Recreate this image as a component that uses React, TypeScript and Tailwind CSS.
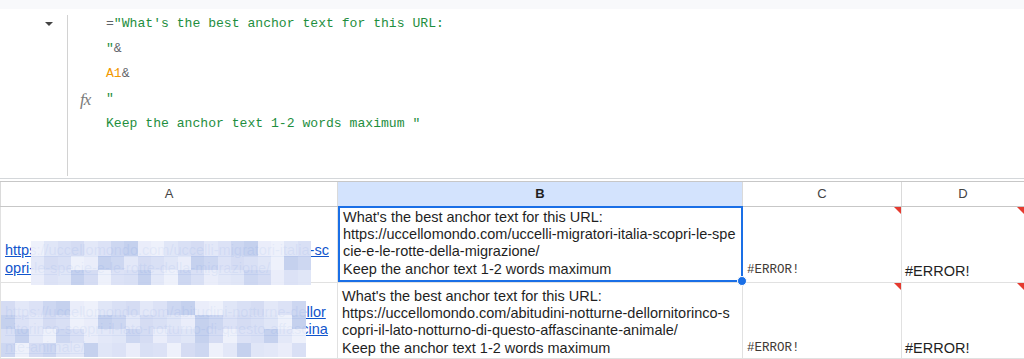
import React from "react";

const cols = "grid-cols-[338px_405px_159px_1fr]";

// pixelated blur tiles over the private URLs
function Mosaic({ rows, cols: n, seed, className }: { rows: number; cols: number; seed: number; className: string }) {
    const tones = ["#d3dbf3", "#dfe5f7", "#e9edfa", "#cbd5f1", "#e2e7f8", "#d8dff5", "#eef1fb", "#c2cfee", "#dbe1f6"];
    const cells = [];
    for (let r = 0; r < rows; r++) {
        for (let c = 0; c < n; c++) {
            const i = (r * 7 + c * 13 + seed * 5 + ((c * r + seed) % 4)) % tones.length;
            cells.push(<div key={`${r}-${c}`} style={{ backgroundColor: tones[i] }} />);
        }
    }
    return (
        <div
            className={`absolute grid opacity-95 ${className}`}
            style={{ gridTemplateColumns: `repeat(${n}, 1fr)`, gridTemplateRows: `repeat(${rows}, 1fr)` }}
        >
            {cells}
        </div>
    );
}

function ErrorCorner() {
    return <div className="absolute top-0 right-0 w-0 h-0 border-t-[7px] border-l-[7px] border-t-[#e53a2f] border-l-transparent" />;
}

export default function App() {
    const green = "text-[#1e8e3e]";
    return (
        <div className="w-[1024px] h-[359px] overflow-hidden bg-white font-['Liberation_Sans',Arial,sans-serif]">
            <div className="h-[9px] bg-[#f8f9fb]" />

            {/* formula bar */}
            <div className="flex h-[170px] border-b border-[#d4d7da]">
                <div className="w-[67px] pl-[45px] pt-[13px]">
                    <div className="w-0 h-0 border-x-[4px] border-x-transparent border-t-[4px] border-t-[#444]" />
                </div>
                <div className="mt-[6px] mb-[2px] w-px bg-[#d2d2d2]" />
                <div className="w-[38px] pl-[12px] pt-[78px]">
                    <span className="font-['Liberation_Serif',serif] italic text-[17px] text-[#7a7a7a] tracking-[-1px]">fx</span>
                </div>
                <div className="pt-[2px] font-['Liberation_Mono',monospace] text-[13.1px] leading-[25px] whitespace-pre text-[#5f6368]">
                    <div>=<span className={green}>"What's the best anchor text for this URL:</span></div>
                    <div><span className={green}>"</span>&amp;</div>
                    <div><span className="text-[#f29900]">A1</span>&amp;</div>
                    <div><span className={green}>"</span></div>
                    <div><span className={green}>Keep the anchor text 1-2 words maximum "</span></div>
                </div>
            </div>

            {/* sheet */}
            <div className="mt-[2px] border-t border-[#c7c7c7]">
                <div className={`grid ${cols} h-[25px] text-[13px] text-[#444] border-b border-[#c7c7c7]`}>
                    <div className="flex items-center justify-center border-l border-r border-[#dadada]">A</div>
                    <div className="flex items-center justify-center border-r border-[#dadada] bg-[#d3e3fd] font-bold text-[#1f1f1f]">B</div>
                    <div className="flex items-center justify-center border-r border-[#dadada]">C</div>
                    <div className="flex items-center justify-center">D</div>
                </div>

                {/* row 1 */}
                <div className={`grid ${cols} h-[76px] text-[14.5px] leading-[17.3px] border-b border-[#e1e1e1]`}>
                    <div className="relative flex flex-col justify-end px-[4px] pb-[5px] border-l border-r border-[#e1e1e1] break-all">
                        <span className="text-[#1155cc] underline">https://uccellomondo.com/uccelli-migratori-italia-scopri-le-specie-e-le-rotte-della-migrazione/</span>
                        <Mosaic rows={3} cols={21} seed={1} className="left-[30px] top-[34px] w-[280px] h-[44px] rounded-[8px]" />
                    </div>
                    <div className="relative flex flex-col justify-end px-[3px] pb-[2px] border-2 border-[#1a6fe6] -mt-px text-[#1f1f1f]">
                        <div>What's the best anchor text for this URL:</div>
                        <div className="break-all">https://uccellomondo.com/uccelli-migratori-italia-scopri-le-specie-e-le-rotte-della-migrazione/</div>
                        <div>Keep the anchor text 1-2 words maximum</div>
                        <div className="absolute -right-[6px] -bottom-[6px] w-[10px] h-[10px] rounded-full bg-[#1a6fe6] border border-white" />
                    </div>
                    <div className="relative flex items-end px-[4px] pb-[3px] border-r border-[#e1e1e1]">
                        <span className="font-['Liberation_Mono',monospace] text-[12.5px] text-[#3f3a36]">#ERROR!</span>
                        <ErrorCorner />
                    </div>
                    <div className="relative flex items-end px-[3px] pb-[2px] text-[#1f1f1f]">
                        <span>#ERROR!</span>
                        <ErrorCorner />
                    </div>
                </div>

                {/* row 2 */}
                <div className={`grid ${cols} h-[76px] text-[14.5px] leading-[17.3px] border-b border-[#e1e1e1]`}>
                    <div className="relative flex flex-col justify-end px-[4px] pb-[2px] border-l border-r border-[#e1e1e1] break-all">
                        <span className="text-[#1155cc] underline">https://uccellomondo.com/abitudini-notturne-dellornitorinco-scopri-il-lato-notturno-di-questo-affascinante-animale/</span>
                        <Mosaic rows={4} cols={22} seed={3} className="left-0 top-[18px] w-[305px] h-[56px] rounded-tr-[10px]" />
                    </div>
                    <div className="flex flex-col justify-end pl-[4px] pr-[7px] pb-[1px] border-r border-[#e1e1e1] text-[#1f1f1f]">
                        <div>What's the best anchor text for this URL:</div>
                        <div className="break-all">https://uccellomondo.com/abitudini-notturne-dellornitorinco-scopri-il-lato-notturno-di-questo-affascinante-animale/</div>
                        <div>Keep the anchor text 1-2 words maximum</div>
                    </div>
                    <div className="relative flex items-end px-[4px] pb-[1px] border-r border-[#e1e1e1]">
                        <span className="font-['Liberation_Mono',monospace] text-[12.5px] text-[#3f3a36]">#ERROR!</span>
                        <ErrorCorner />
                    </div>
                    <div className="relative flex items-end px-[3px] pb-[1px] text-[#1f1f1f]">
                        <span>#ERROR!</span>
                        <ErrorCorner />
                    </div>
                </div>
            </div>
        </div>
    );
}
